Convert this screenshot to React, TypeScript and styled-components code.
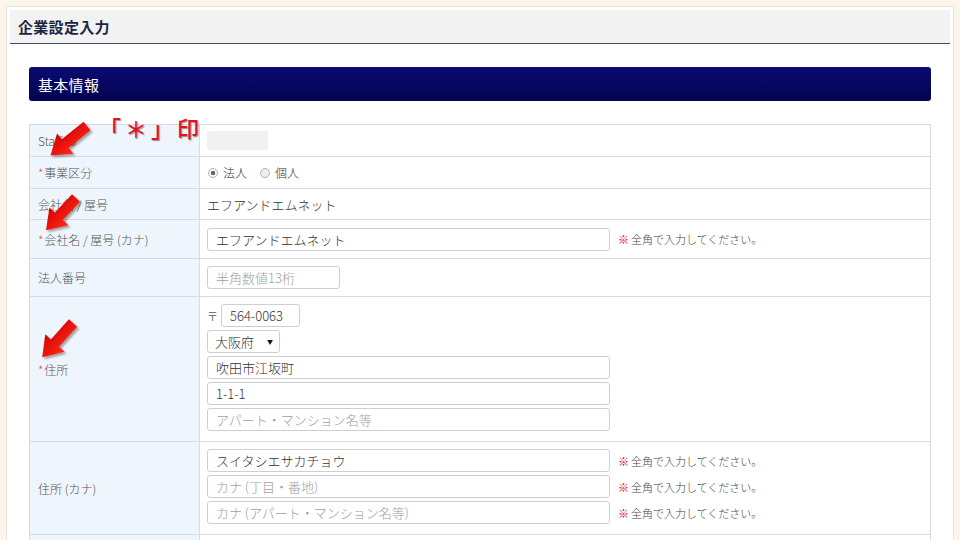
import React from 'react';
import styled, { createGlobalStyle } from 'styled-components';

const GlobalStyle = createGlobalStyle`
  html, body {
    margin: 0;
    padding: 0;
    background: #fcf5ea;
    overflow: hidden;
  }
  body {
    font-family: "Noto Sans CJK JP", "Noto Sans", "Liberation Sans", sans-serif;
    font-weight: 300;
    color: #333;
  }
`;

const Page = styled.div`
  position: relative;
  width: 960px;
  height: 540px;
  padding: 6px;
  box-sizing: border-box;
`;

const Panel = styled.div`
  background: #fff;
  border: 1px solid #ebe3d9;
  padding: 3px;
  height: 600px;
`;

const TitleBar = styled.div`
  height: 33px;
  background: #f2f2f2;
  border-bottom: 1px solid #454b66;
  display: flex;
  align-items: center;
  padding-left: 8px;
`;

const Title = styled.h1`
  margin: 0;
  font-size: 15px;
  font-weight: bold;
  color: #1d2640;
  letter-spacing: 0.3px;
`;

const Content = styled.div`
  padding: 23px 19px 0 19px;
`;

const SectionBar = styled.div`
  height: 34px;
  border-radius: 3px;
  background: linear-gradient(#0b0b72, #03034f);
  display: flex;
  align-items: center;
  padding-left: 9px;
  color: #fff;
  font-size: 15px;
  font-weight: 400;
  letter-spacing: 0.3px;
`;

const Table = styled.div`
  margin-top: 23px;
  border: 1px solid #d6dbe1;
  border-bottom: none;
`;

const Row = styled.div<{ $h?: number }>`
  display: grid;
  grid-template-columns: 170px 1fr;
  border-bottom: 1px solid #d6dbe1;
  min-height: ${(p) => (p.$h ? p.$h - 1 : 31)}px;
`;

const Label = styled.div`
  background: #eef5fc;
  border-right: 1px solid #d6dbe1;
  display: flex;
  align-items: center;
  padding-left: 8px;
  font-size: 12px;
  color: #555;
`;

const Req = styled.span`
  color: #d9534f;
  margin-right: 1px;
`;

const Cell = styled.div<{ $pt?: number; $pb?: number }>`
  display: flex;
  flex-direction: column;
  justify-content: center;
  gap: 3px;
  padding: ${(p) => p.$pt ?? 0}px 8px ${(p) => p.$pb ?? 0}px 7px;
  font-size: 13px;
  color: #333;
`;

const Line = styled.div`
  display: flex;
  align-items: center;
  gap: 8px;
`;

const Blur = styled.div`
  width: 61px;
  height: 19px;
  background: #f1f1f1;
  border-radius: 2px;
`;

const Radio = styled.span<{ $on?: boolean }>`
  width: 8px;
  height: 8px;
  border-radius: 50%;
  border: 1px solid #b5b5b5;
  background: ${(p) => (p.$on ? 'radial-gradient(circle, #666 0 2px, #f4f4f4 2.5px)' : '#eee')};
  display: inline-block;
  margin-left: 1px;
`;

const RadioLabel = styled.label`
  display: flex;
  align-items: center;
  gap: 5px;
  font-size: 12px;
  margin-right: 4px;
`;

const Input = styled.input<{ $w?: number }>`
  box-sizing: border-box;
  width: ${(p) => p.$w ?? 403}px;
  height: 23px;
  border: 1px solid #cfcfcf;
  border-radius: 3px;
  padding: 0 8px;
  font-family: inherit;
  font-weight: 300;
  font-size: 13px;
  color: #333;
  background: #fff;
  outline: none;
  &::placeholder {
    color: #a0a0a0;
  }
`;

const Select = styled.div`
  box-sizing: border-box;
  width: 73px;
  height: 23px;
  border: 1px solid #cfcfcf;
  border-radius: 3px;
  display: flex;
  align-items: center;
  justify-content: space-between;
  padding: 0 6px 0 7px;
  font-size: 13px;
  &::after {
    content: '▼';
    font-size: 6px;
    color: #111;
  }
`;

const Zip = styled.span`
  font-size: 11px;
  color: #555;
  margin-right: -5px;
`;

const Note = styled.span`
  font-size: 11px;
  color: #444;
  &::before {
    content: '※';
    color: #d7000f;
    font-weight: bold;
    margin-right: 2px;
  }
`;

const Overlay = styled.svg`
  position: absolute;
  left: 0;
  top: 0;
  pointer-events: none;
`;

const Mark = styled.div`
  position: absolute;
  left: 99px;
  top: 111px;
  font-size: 22px;
  font-weight: 500;
  color: #e8101a;
  text-shadow: 1px 1px 1px rgba(80, 80, 80, 0.6);
  letter-spacing: 4px;
  font-family: "Noto Sans CJK JP", sans-serif;
`;

type Arrow = { x: number; y: number; a: number; l: number };

const arrows: Arrow[] = [
  { x: 87, y: 126, a: 141, l: 47 },
  { x: 76, y: 198, a: 133, l: 44 },
  { x: 73, y: 323, a: 132, l: 46 },
];

const ArrowShape = ({ x, y, a, l }: Arrow) => (
  <g transform={`translate(${x} ${y}) rotate(${a})`}>
    <polygon
      points={`0,-5.5 ${l - 19},-5.5 ${l - 19},-13 ${l},0 ${l - 19},13 ${l - 19},5.5 0,5.5`}
      fill="url(#redGrad)"
    />
  </g>
);

const NOTE = '全角で入力してください。';

export default function App() {
  return (
    <>
      <GlobalStyle />
      <Page>
        <Panel>
          <TitleBar>
            <Title>企業設定入力</Title>
          </TitleBar>
          <Content>
            <SectionBar>基本情報</SectionBar>
            <Table>
              <Row $h={32}>
                <Label>Staff ID</Label>
                <Cell>
                  <Blur />
                </Cell>
              </Row>
              <Row $h={32}>
                <Label>
                  <Req>*</Req>事業区分
                </Label>
                <Cell>
                  <Line>
                    <RadioLabel>
                      <Radio $on />
                      法人
                    </RadioLabel>
                    <RadioLabel>
                      <Radio />
                      個人
                    </RadioLabel>
                  </Line>
                </Cell>
              </Row>
              <Row $h={31}>
                <Label>会社名 / 屋号</Label>
                <Cell>エフアンドエムネット</Cell>
              </Row>
              <Row $h={39}>
                <Label>
                  <Req>*</Req>会社名 / 屋号 (カナ)
                </Label>
                <Cell>
                  <Line>
                    <Input defaultValue="エフアンドエムネット" />
                    <Note>{NOTE}</Note>
                  </Line>
                </Cell>
              </Row>
              <Row $h={38}>
                <Label>法人番号</Label>
                <Cell>
                  <Input $w={133} placeholder="半角数値13桁" />
                </Cell>
              </Row>
              <Row $h={145}>
                <Label>
                  <Req>*</Req>住所
                </Label>
                <Cell $pt={7} $pb={10}>
                  <Line>
                    <Zip>〒</Zip>
                    <Input $w={79} defaultValue="564-0063" />
                  </Line>
                  <Select>大阪府</Select>
                  <Input defaultValue="吹田市江坂町" />
                  <Input defaultValue="1-1-1" />
                  <Input placeholder="アパート・マンション名等" />
                </Cell>
              </Row>
              <Row $h={93}>
                <Label>住所 (カナ)</Label>
                <Cell $pt={7} $pb={10}>
                  <Line>
                    <Input defaultValue="スイタシエサカチョウ" />
                    <Note>{NOTE}</Note>
                  </Line>
                  <Line>
                    <Input placeholder="カナ (丁目・番地)" />
                    <Note>{NOTE}</Note>
                  </Line>
                  <Line>
                    <Input placeholder="カナ (アパート・マンション名等)" />
                    <Note>{NOTE}</Note>
                  </Line>
                </Cell>
              </Row>
              <Row $h={40}>
                <Label />
                <Cell />
              </Row>
            </Table>
          </Content>
        </Panel>
        <Mark>「＊」印</Mark>
        <Overlay width="960" height="540" viewBox="0 0 960 540">
          <defs>
            <linearGradient id="redGrad" x1="0" y1="0" x2="0" y2="1">
              <stop offset="0" stopColor="#ff2a1a" />
              <stop offset="1" stopColor="#d40000" />
            </linearGradient>
            <filter id="shadow" x="-20%" y="-20%" width="150%" height="150%">
              <feDropShadow dx="2" dy="2" stdDeviation="1.2" floodColor="#000" floodOpacity="0.35" />
            </filter>
          </defs>
          <g filter="url(#shadow)">
            {arrows.map((a, i) => (
              <ArrowShape key={i} {...a} />
            ))}
          </g>
        </Overlay>
      </Page>
    </>
  );
}
